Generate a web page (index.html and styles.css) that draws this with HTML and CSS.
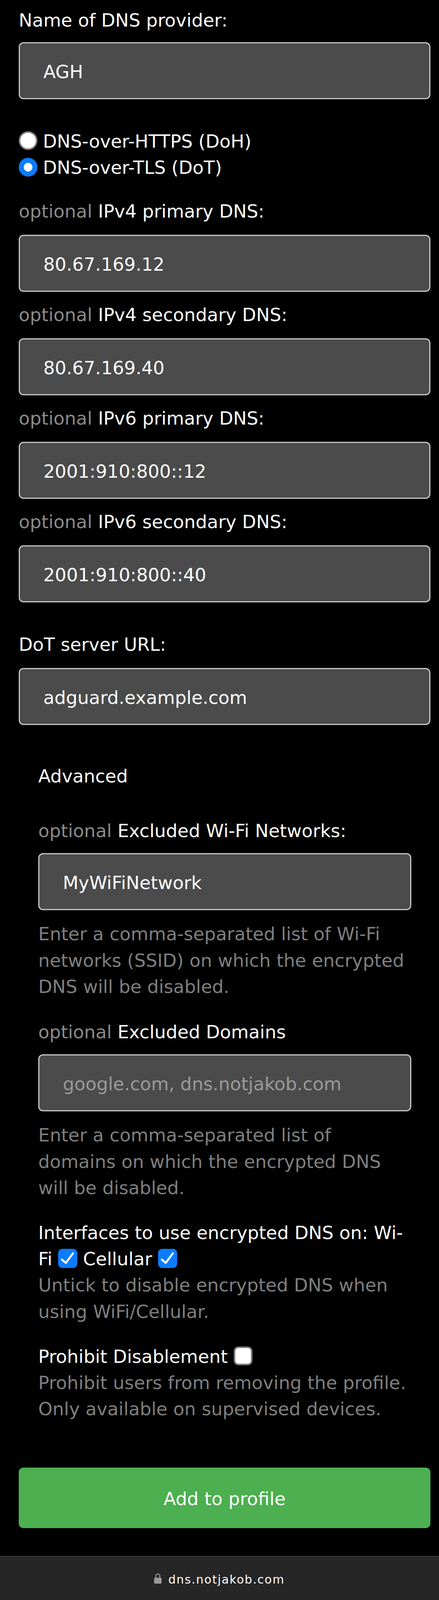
FILE: index.html
```html
<!DOCTYPE html>
<html lang="en">
<head>
<meta charset="utf-8">
<title>Encrypted DNS profile</title>
<link rel="stylesheet" href="styles.css">
</head>
<body>
<main class="page">
  <form class="form">
    <div class="field field--first">
      <label class="label" for="provider">Name of DNS provider:</label>
      <input class="text-input" id="provider" type="text" value="AGH">
    </div>

    <div class="radios">
      <label class="radio-row"><input class="radio" type="radio" name="proto"><span>DNS-over-HTTPS (DoH)</span></label>
      <label class="radio-row"><input class="radio" type="radio" name="proto" checked><span>DNS-over-TLS (DoT)</span></label>
    </div>

    <div class="field">
      <label class="label" for="v4a"><span class="optional">optional</span> IPv4 primary DNS:</label>
      <input class="text-input" id="v4a" type="text" value="80.67.169.12">
    </div>
    <div class="field">
      <label class="label" for="v4b"><span class="optional">optional</span> IPv4 secondary DNS:</label>
      <input class="text-input" id="v4b" type="text" value="80.67.169.40">
    </div>
    <div class="field">
      <label class="label" for="v6a"><span class="optional">optional</span> IPv6 primary DNS:</label>
      <input class="text-input" id="v6a" type="text" value="2001:910:800::12">
    </div>
    <div class="field">
      <label class="label" for="v6b"><span class="optional">optional</span> IPv6 secondary DNS:</label>
      <input class="text-input" id="v6b" type="text" value="2001:910:800::40">
    </div>

    <div class="field field--url">
      <label class="label" for="url">DoT server URL:</label>
      <input class="text-input" id="url" type="text" value="adguard.example.com">
    </div>

    <details class="advanced" open>
      <summary class="advanced-title">Advanced</summary>

      <div class="field field--wifi">
        <label class="label" for="wifi"><span class="optional">optional</span> Excluded Wi-Fi Networks:</label>
        <input class="text-input" id="wifi" type="text" value="MyWiFiNetwork">
        <p class="help">Enter a comma-separated list of Wi-Fi networks (SSID) on which the encrypted DNS will be disabled.</p>
      </div>

      <div class="field">
        <label class="label" for="domains"><span class="optional">optional</span> Excluded Domains</label>
        <input class="text-input" id="domains" type="text" placeholder="google.com, dns.notjakob.com">
        <p class="help">Enter a comma-separated list of domains on which the encrypted DNS will be disabled.</p>
      </div>

      <p class="option">Interfaces to use encrypted DNS on: Wi-<br>Fi <span class="check" role="checkbox" aria-checked="true"><svg viewBox="0 0 49 49" width="49" height="49"><rect width="49" height="49" rx="11" fill="#0b7cff"/><path d="M9.5 27.5 L19.7 36 L38 11.5" fill="none" stroke="#fff" stroke-width="5" stroke-linecap="round" stroke-linejoin="round"/></svg></span> Cellular <span class="check" role="checkbox" aria-checked="true"><svg viewBox="0 0 49 49" width="49" height="49"><rect width="49" height="49" rx="11" fill="#0b7cff"/><path d="M9.5 27.5 L19.7 36 L38 11.5" fill="none" stroke="#fff" stroke-width="5" stroke-linecap="round" stroke-linejoin="round"/></svg></span></p>
      <p class="option-help">Untick to disable encrypted DNS when using WiFi/Cellular.</p>

      <p class="option">Prohibit Disablement <span class="check check--off" role="checkbox" aria-checked="false"></span></p>
      <p class="option-help">Prohibit users from removing the profile. Only available on supervised devices.</p>
    </details>

    <button class="submit" type="button">Add to profile</button>
  </form>
</main>

<footer class="browser-bar">
  <div class="url">
    <svg class="lock" viewBox="0 0 19 26" width="19" height="26" aria-hidden="true"><path d="M4.5 12 V6.3 A5 5 0 0 1 14.5 6.3 V12" fill="none" stroke="#9a9aa0" stroke-width="2.6"/><rect x="0" y="11" width="19" height="15" rx="2.5" fill="#9a9aa0"/></svg>
    <span class="url-text">dns.notjakob.com</span>
  </div>
  <div class="home-indicator"></div>
</footer>
</body>
</html>
```

FILE: styles.css
```css
html {
  background: #000;
}

body {
  margin: 0;
  background: #000;
  color: #fff;
  font-family: "DejaVu Sans", Verdana, sans-serif;
  font-size: 46.5px;
  line-height: 67.2px;
}

.page {
  padding: 18.6px 22px 0 48px;
}

.form {
  margin: 0;
}

.label {
  display: block;
  margin-bottom: 25.5px;
}

.field--first .label,
.advanced .label {
  margin-bottom: 22.5px;
}

.optional {
  color: #8a8a8a;
}

.text-input {
  display: block;
  box-sizing: border-box;
  width: 100%;
  height: 146px;
  margin: 0;
  padding: 6px 60px 0;
  border: 3px solid #c6c6c6;
  border-radius: 12px;
  background: #4b4b4b;
  color: #fff;
  font: inherit;
  line-height: normal;
  outline: none;
}

.text-input::placeholder {
  color: #9a9a9a;
  opacity: 1;
}

.field {
  margin-top: 26.3px;
}

.field--first {
  margin-top: 0;
}

.radios {
  margin-top: 75px;
}

.radios + .field {
  margin-top: 44.6px;
}

.radio-row {
  display: flex;
  align-items: center;
  gap: 14px;
  height: 67.2px;
}

.radio {
  appearance: none;
  -webkit-appearance: none;
  flex: none;
  box-sizing: border-box;
  width: 48px;
  height: 48px;
  margin: 0 0 5px 0;
  border: 4px solid #808080;
  border-radius: 50%;
  background: #fff;
}

.radio:checked {
  border-color: #0b7cff;
  background: radial-gradient(circle at center, #fff 0 10.5px, #0b7cff 11.5px);
}

.field--url {
  margin-top: 75px;
}

.advanced {
  margin-top: 98.6px;
  padding: 0 49px 0 50px;
}

.advanced-title {
  display: block;
  list-style: none;
  cursor: default;
}

.advanced-title::-webkit-details-marker {
  display: none;
}

.advanced .field {
  margin-top: 49.2px;
}

.advanced .field--wifi {
  margin-top: 72.8px;
}

.help {
  margin: 28.5px 0 0;
  color: #7f7f7f;
}

.option {
  margin: 48px 0 0;
}

.option-help {
  margin: 0;
  color: #7f7f7f;
}

.check {
  display: inline-block;
  width: 49px;
  height: 49px;
  vertical-align: -7px;
}

.check svg {
  display: block;
}

.check--off {
  box-sizing: border-box;
  width: 48px;
  height: 48px;
  border: 4px solid #7c7c7c;
  border-radius: 12px;
  background: #fff;
  vertical-align: -6px;
}

.submit {
  display: block;
  box-sizing: border-box;
  width: 100%;
  height: 155px;
  margin-top: 115.5px;
  padding: 4px 0 0;
  border: 0;
  border-radius: 12px;
  background: #4caf50;
  color: #fff;
  font: inherit;
  line-height: normal;
}

.browser-bar {
  box-sizing: border-box;
  height: 157px;
  margin-top: 71px;
  padding-top: 38.6px;
  border-top: 2px solid #3a3a3a;
  background: #262626;
  display: flex;
  flex-direction: column;
  align-items: center;
}

.url {
  display: flex;
  align-items: baseline;
  gap: 17px;
  font-family: "DejaVu Sans", Verdana, sans-serif;
  font-size: 30px;
  line-height: 40px;
  letter-spacing: 2px;
  color: #fff;
}

.lock {
  display: block;
  flex: none;
}

.home-indicator {
  width: 401px;
  height: 15px;
  margin-top: 37.4px;
  border-radius: 8px;
  background: #fff;
}
```
